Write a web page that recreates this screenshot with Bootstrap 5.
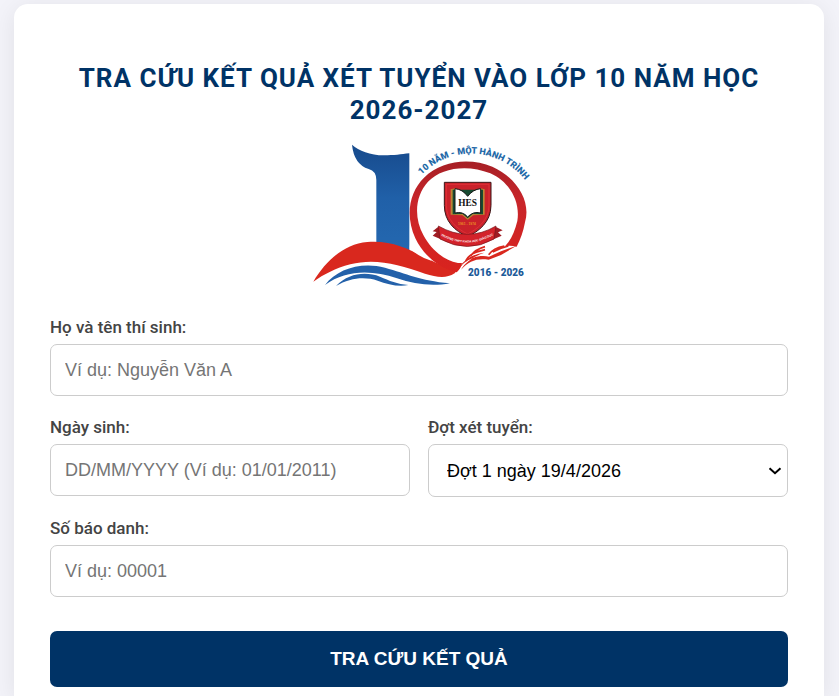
<!DOCTYPE html>
<html lang="vi">
<head>
<meta charset="utf-8">
<meta name="viewport" content="width=device-width, initial-scale=1">
<title>Tra cứu kết quả xét tuyển vào lớp 10</title>
<link rel="stylesheet" href="https://cdn.jsdelivr.net/npm/bootstrap@5.3.0/dist/css/bootstrap.min.css">
<style>
  body { background: #f3f3f9; font-family: Roboto, "Liberation Sans", sans-serif; padding: 4px 15px 0 14px; }
  .lookup { border-radius: 14px 14px 0 0; box-shadow: 0 4px 24px rgba(0, 0, 0, .08); padding: 58px 36px 9px; }
  .lookup-title { color: #003366; font-size: 26px; line-height: 32px; font-weight: 700; letter-spacing: 1px; margin-bottom: 9px; }
  .anniversary { width: 240px; height: 160px; margin-bottom: 21px; }
  .lookup .form-label { color: #444; font-size: 17px; line-height: 22px; font-weight: 500; margin-bottom: 6px; }
  .lookup .form-control, .lookup .form-select { font-family: "Liberation Sans", Arial, sans-serif; font-size: 18px; line-height: 22px; border: 1px solid #ccc; border-radius: 7px; padding: 14px; color: #000; }
  .lookup .form-control::placeholder { color: #757575; }
  .lookup .form-select { padding: 15px 30px 14px 18px; background-image: url("data:image/svg+xml,%3Csvg xmlns='http://www.w3.org/2000/svg' viewBox='0 0 14 8'%3E%3Cpath d='M1.500 1.200 7 6.200l5.500-5' fill='none' stroke='%23000' stroke-width='2'/%3E%3C/svg%3E"); background-size: 14px 8px; background-position: right 5px center; }
  .fields { --bs-gutter-x: 18px; --bs-gutter-y: 20px; margin-bottom: 34px; }
  .btn-lookup { --bs-btn-bg: #003366; --bs-btn-color: #fff; --bs-btn-hover-bg: #00264d; --bs-btn-hover-color: #fff; --bs-btn-active-bg: #00264d; --bs-btn-active-color: #fff; font-family: "Liberation Sans", Arial, sans-serif; font-size: 19px; line-height: 24px; font-weight: 700; border: 0; border-radius: 7px; padding: 16px; }
</style>
</head>
<body>
<main class="card lookup border-0">
  <h1 class="lookup-title text-center">TRA CỨU KẾT QUẢ XÉT TUYỂN VÀO LỚP 10 NĂM HỌC 2026-2027</h1>
  <svg class="anniversary d-block mx-auto" viewBox="-3 0 720 480" role="img" aria-label="10 năm - Một hành trình, 2016 - 2026">
    <defs>
      <linearGradient id="blue" x1="0" y1="0" x2="0" y2="1"><stop offset="0" stop-color="#174a8c"/><stop offset=".5" stop-color="#2060a8"/><stop offset="1" stop-color="#2468b0"/></linearGradient>
      <linearGradient id="red" x1="0" y1="0" x2="0" y2="1"><stop offset="0" stop-color="#a61f25"/><stop offset=".35" stop-color="#c8252a"/><stop offset="1" stop-color="#d9231e"/></linearGradient>
      <path id="motto" d="M366 118A205 205 0 0 1 674 134"/>
      <path id="school" d="M416 298Q503 348 586 296"/>
    </defs>
    <path fill="url(#blue)" d="M156 29C177 47 210 61 252 61C282 61 303 58 328 55V350Q285 325 229 322V135Q229 108 206 102Q162 88 156 29Z"/>
    <path fill="#d9281e" d="M40 440C78 376 133 327 202 321C279 315 331 345 385 372C417 388 451 402 478 398L464 415C437 432 409 426 375 416C296 388 224 368 151 388C106 400 72 418 40 440Z"/>
    <path fill="#fff" d="M329 340Q352 364 394 377L374 350L333 290Z"/>
    <path fill="url(#red)" d="M470 412C420 402 369 360 346 310C315 240 328 172 372 128C425 75 512 68 577 95C650 128 694 199 675 262Q668 301 650 335Q630 330 615 334L625 322Q642 299 652 258C662 197 625 138 571 115C503 87 424 98 384 140C344 184 342 248 370 300C394 345 432 376 474 384L486 384Q482 402 470 412Z"/>
    <path fill="#2361aa" d="M75 450C112 402 182 380 255 398C321 416 357 436 450 445C397 455 342 448 291 430C215 404 138 404 75 450Z"/>
    <path fill="#2361aa" d="M108 453C146 414 197 409 240 425C268 437 292 447 325 450C295 457 262 447 233 437C194 424 150 428 108 453Z"/>
    <path fill="#d9281e" d="M470 411C484 380 512 358 553 353C516 366 495 384 483 404C507 377 531 369 566 374L603 360L650 332L603 349L567 365C543 359 514 365 488 388Z"/>
    <path fill="none" stroke="#d9281e" stroke-width="5" d="M497 378C511 352 530 351 555 344M512 363Q526 343 555 335M566 359Q580 339 613 333M578 351Q598 340 625 333"/>
    <path fill="#c9212a" stroke="#3b1718" stroke-width="3" d="M433 142H573V211C573 263 534 290 503 305C464 288 433 259 433 211Z"/>
    <path fill="none" stroke="#e8383d" stroke-width="2" d="M439 148H567V211C567 257 530 283 503 297C469 281 439 253 439 211Z"/>
    <path fill="#b98634" d="M452 163L466 160L503 183L541 160L554 163V239L520 241L503 254L487 241L452 239Z"/>
    <path fill="#174b31" d="M458 164H549V238L518 237L503 250L488 237L458 238Z"/>
    <path fill="#fff" stroke="#171717" stroke-width="3" d="M465 161Q488 163 503 184Q519 163 542 161V234Q519 228 503 246Q488 228 465 234Z"/>
    <text x="503" y="214" text-anchor="middle" font-family="Liberation Serif, serif" font-size="28" font-weight="700" fill="#111">HES</text>
    <text x="501" y="271" text-anchor="middle" font-family="Liberation Sans, sans-serif" font-size="10" font-weight="700" fill="#e98a25">1961 - 1974</text>
    <path fill="#9f1c23" d="M414 276L398 289L410 291L398 302L428 315L434 286ZM588 276L608 286L594 292L605 302L574 316L568 286Z"/>
    <path fill="#d3222a" stroke="#74151a" stroke-width="2" d="M415 273Q503 323 588 273L582 312Q503 357 420 312Z"/>
    <text font-family="Liberation Sans, sans-serif" font-size="9" font-weight="700" fill="#fff"><textPath href="#school" startOffset="50%" text-anchor="middle">TRƯỜNG THPT KHOA HỌC GIÁO DỤC</textPath></text>
    <text font-family="Roboto, sans-serif" font-size="27" font-weight="900" fill="#1e68a7"><textPath href="#motto" startOffset="50%" text-anchor="middle">10 NĂM - MỘT HÀNH TRÌNH</textPath></text>
    <text x="588" y="422" text-anchor="middle" font-family="Roboto, sans-serif" font-size="30" font-weight="900" fill="#1d5b99">2016 - 2026</text>
  </svg>
  <form>
    <div class="row fields">
      <div class="col-12">
        <label class="form-label d-block" for="fullName">Họ và tên thí sinh:</label>
        <input class="form-control" id="fullName" type="text" placeholder="Ví dụ: Nguyễn Văn A">
      </div>
      <div class="col-6">
        <label class="form-label d-block" for="birthDate">Ngày sinh:</label>
        <input class="form-control" id="birthDate" type="text" placeholder="DD/MM/YYYY (Ví dụ: 01/01/2011)">
      </div>
      <div class="col-6">
        <label class="form-label d-block" for="round">Đợt xét tuyển:</label>
        <select class="form-select" id="round"><option>Đợt 1 ngày 19/4/2026</option></select>
      </div>
      <div class="col-12">
        <label class="form-label d-block" for="candidateNo">Số báo danh:</label>
        <input class="form-control" id="candidateNo" type="text" placeholder="Ví dụ: 00001">
      </div>
    </div>
    <button class="btn btn-lookup w-100" type="submit">TRA CỨU KẾT QUẢ</button>
  </form>
</main>
<script src="https://cdn.jsdelivr.net/npm/bootstrap@5.3.0/dist/js/bootstrap.bundle.min.js"></script>
</body>
</html>
